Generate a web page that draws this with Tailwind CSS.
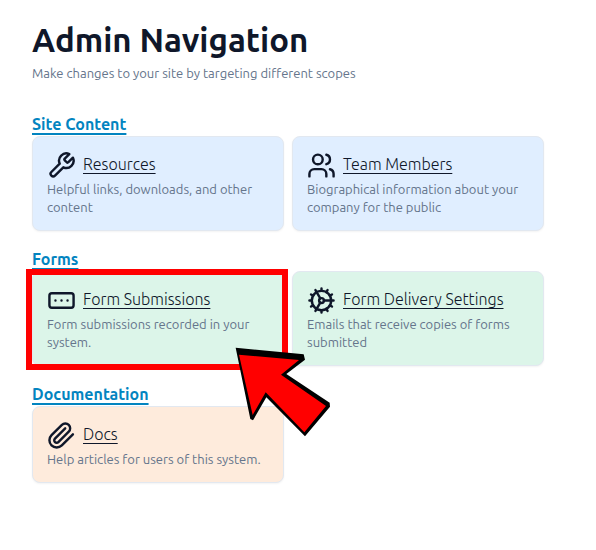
<!DOCTYPE html>
<html lang="en">
<head>
<meta charset="utf-8">
<meta name="viewport" content="width=device-width, initial-scale=1">
<title>Admin Navigation</title>
<script src="https://cdn.jsdelivr.net/npm/@tailwindcss/browser@4"></script>
</head>
<body class="bg-white text-[#0f172a] font-['Ubuntu','Noto_Sans',sans-serif]">
<main class="max-w-[576px] px-8 pt-5 pb-8">
  <header>
    <h1 class="text-[33px] leading-10 font-bold">Admin Navigation</h1>
    <p class="mt-1 text-[13px] leading-[18px] text-[#64748b]">Make changes to your site by targeting different scopes</p>
  </header>

  <div class="mt-[30px] flex flex-col gap-4">
    <section>
      <h2 class="text-[16px] leading-6 font-bold"><a href="#content" class="text-[#0284c0] underline decoration-2 underline-offset-3">Site Content</a></h2>
      <div class="grid grid-cols-2 gap-2">
        <article class="rounded-lg border border-[#e2e8f0] bg-[#e0eeff] p-[14px] shadow-xs">
          <h3 class="flex items-start gap-[7px] text-[16px] leading-[27px] font-light">
            <svg class="size-[29px] shrink-0" viewBox="0 0 24 24" fill="none" stroke="currentColor" stroke-width="2" stroke-linecap="round" stroke-linejoin="round" aria-hidden="true"><path d="M14.7 6.3a1 1 0 0 0 0 1.4l1.6 1.6a1 1 0 0 0 1.4 0l3.77-3.77a6 6 0 0 1-7.94 7.94l-6.91 6.91a2.12 2.12 0 0 1-3-3l6.91-6.91a6 6 0 0 1 7.94-7.94l-3.76 3.76z"/></svg>
            <a href="#resources" class="underline decoration-1 underline-offset-3">Resources</a>
          </h3>
          <p class="text-[13px] leading-[18px] text-[#64748b]">Helpful links, downloads, and other content</p>
        </article>
        <article class="rounded-lg border border-[#e2e8f0] bg-[#e0eeff] p-[14px] shadow-xs">
          <h3 class="flex items-start gap-[7px] text-[16px] leading-[27px] font-light">
            <svg class="size-[29px] shrink-0" viewBox="0 0 24 24" fill="none" stroke="currentColor" stroke-width="2" stroke-linecap="round" stroke-linejoin="round" aria-hidden="true"><path d="M16 21v-2a4 4 0 0 0-4-4H6a4 4 0 0 0-4 4v2"/><circle cx="9" cy="7" r="4"/><path d="M22 21v-2a4 4 0 0 0-3-3.87M16 3.13a4 4 0 0 1 0 7.75"/></svg>
            <a href="#team" class="underline decoration-1 underline-offset-3">Team Members</a>
          </h3>
          <p class="text-[13px] leading-[18px] text-[#64748b]">Biographical information about your company for the public</p>
        </article>
      </div>
    </section>

    <section>
      <h2 class="text-[16px] leading-6 font-bold"><a href="#forms" class="text-[#0284c0] underline decoration-2 underline-offset-3">Forms</a></h2>
      <div class="grid grid-cols-2 gap-2">
        <article class="relative z-10 rounded-lg border border-[#e2e8f0] bg-[#dcf5e9] p-[14px] shadow-xs">
          <h3 class="flex items-start gap-[7px] text-[16px] leading-[27px] font-light">
            <svg class="size-[29px] shrink-0" viewBox="0 0 24 24" fill="none" stroke="currentColor" stroke-width="2" stroke-linecap="round" stroke-linejoin="round" aria-hidden="true"><rect x="2" y="6" width="20" height="12" rx="2"/><path d="M12 12h.01M17 12h.01M7 12h.01"/></svg>
            <a href="#submissions" class="underline decoration-1 underline-offset-3">Form Submissions</a>
          </h3>
          <p class="text-[13px] leading-[18px] text-[#64748b]">Form submissions recorded in your system.</p>
          <!-- Highlight frame and pointer -->
          <div class="pointer-events-none absolute -top-[3px] -right-[5px] -bottom-[5px] -left-[7px] border-6 border-[#ff0000]"></div>
          <svg class="pointer-events-none absolute top-[63px] left-[192px] h-[110px] w-[115px]" viewBox="0 0 345 330" aria-hidden="true">
            <path d="M32 38 236 58 240 74 184 117 314 203 315 215 240 304 124 187 84 256 76 252Z" fill="#000"/>
            <path d="M42 59 222 75 168 119 303 213 238 292 122 172 83 240Z" fill="#f00"/>
          </svg>
        </article>
        <article class="rounded-lg border border-[#e2e8f0] bg-[#dcf5e9] p-[14px] shadow-xs">
          <h3 class="flex items-start gap-[7px] text-[16px] leading-[27px] font-light">
            <svg class="size-[29px] shrink-0" viewBox="0 0 24 24" fill="none" stroke="currentColor" stroke-width="2" stroke-linecap="round" stroke-linejoin="round" aria-hidden="true"><circle cx="12" cy="12" r="8"/><circle cx="12" cy="12" r="2"/><path d="M12 2v2M12 22v-2m5 .66-1-1.73M11 10.27 7 3.34M20.66 17l-1.73-1M3.34 7l1.73 1M14 12h8M2 12h2M20.66 7l-1.73 1M3.34 17l1.73-1M17 3.34l-1 1.73M11 13.73l-4 6.93"/></svg>
            <a href="#delivery" class="underline decoration-1 underline-offset-3">Form Delivery Settings</a>
          </h3>
          <p class="text-[13px] leading-[18px] text-[#64748b]">Emails that receive copies of forms submitted</p>
        </article>
      </div>
    </section>

    <section>
      <h2 class="text-[16px] leading-6 font-bold"><a href="#documentation" class="text-[#0284c0] underline decoration-2 underline-offset-3">Documentation</a></h2>
      <div class="grid grid-cols-2 gap-2">
        <article class="rounded-lg border border-[#e2e8f0] bg-[#feebdc] p-[14px] shadow-xs">
          <h3 class="flex items-start gap-[7px] text-[16px] leading-[27px] font-light">
            <svg class="size-[29px] shrink-0" viewBox="0 0 24 24" fill="none" stroke="currentColor" stroke-width="2" stroke-linecap="round" stroke-linejoin="round" aria-hidden="true"><path d="m21.44 11.05-9.19 9.19a6 6 0 0 1-8.49-8.49l8.57-8.57A4 4 0 1 1 18 8.84l-8.59 8.57a2 2 0 0 1-2.83-2.83l8.49-8.48"/></svg>
            <a href="#docs" class="underline decoration-1 underline-offset-3">Docs</a>
          </h3>
          <p class="text-[13px] leading-[18px] text-[#64748b]">Help articles for users of this system.</p>
        </article>
      </div>
    </section>
  </div>
</main>
</body>
</html>
